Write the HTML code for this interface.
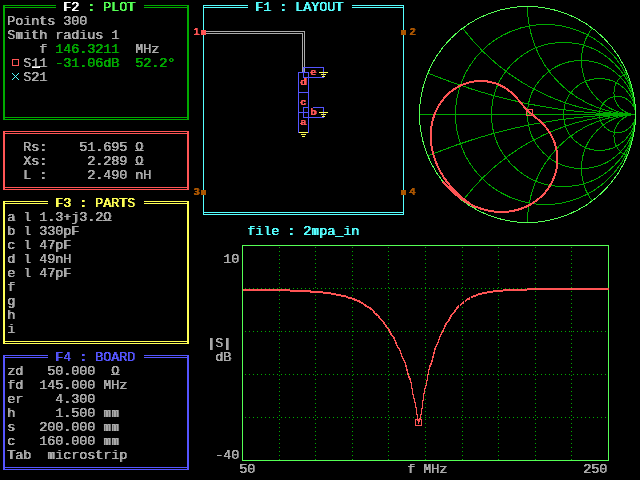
<!DOCTYPE html><html><head><meta charset="utf-8"><title>Puff</title><style>

html,body{margin:0;padding:0;background:#000;}
body{width:640px;height:480px;overflow:hidden;position:relative;font-family:"Liberation Mono",monospace;}
#scr{position:absolute;left:0;top:0;width:640px;height:480px;overflow:hidden;will-change:transform;}
.t{position:absolute;white-space:pre;font-family:"Liberation Mono",monospace;font-size:13.333px;line-height:14px;height:14px;font-weight:normal;color:#aaa;letter-spacing:0;margin:0;padding:0;}
.s{position:absolute;white-space:pre;font-family:"Liberation Sans",sans-serif;font-size:9.5px;line-height:8px;height:8px;font-weight:bold;margin:0;padding:0;transform:scaleX(1.12);transform-origin:0 0;}
svg{position:absolute;left:0;top:0;}
#txt{position:absolute;left:0;top:0;width:640px;height:480px;filter:url(#thr);}
.g{color:#00aa00}.lg{color:#55ff55}.w{color:#fff}.r{color:#ff5555}.y{color:#ffff55}.b{color:#5555ff}.c{color:#55ffff}.br{color:#aa5500}

</style></head><body><div id="scr">
<svg width="640" height="480" viewBox="0 0 640 480">
<defs><filter id="thr" x="0" y="0" width="100%" height="100%" color-interpolation-filters="sRGB"><feComponentTransfer result="a"><feFuncA type="linear" slope="4" intercept="-1.3"/></feComponentTransfer><feOffset in="a" dx="1" dy="0" result="b0"/><feComponentTransfer in="b0" result="b"><feFuncA type="linear" slope="0.7" intercept="0"/></feComponentTransfer><feMerge><feMergeNode in="b"/><feMergeNode in="a"/></feMerge></filter></defs>
<g shape-rendering="crispEdges">
<rect x="3" y="5" width="2" height="115" fill="#00aa00"/>
<rect x="187" y="5" width="2" height="115" fill="#00aa00"/>
<rect x="3" y="5" width="53" height="1" fill="#00aa00"/>
<rect x="144" y="5" width="45" height="1" fill="#00aa00"/>
<rect x="3" y="7" width="53" height="1" fill="#00aa00"/>
<rect x="144" y="7" width="45" height="1" fill="#00aa00"/>
<rect x="3" y="117" width="186" height="1" fill="#00aa00"/>
<rect x="3" y="119" width="186" height="1" fill="#00aa00"/>
<rect x="3" y="131" width="2" height="59" fill="#ff5555"/>
<rect x="187" y="131" width="2" height="59" fill="#ff5555"/>
<rect x="3" y="131" width="186" height="1" fill="#ff5555"/>
<rect x="3" y="133" width="186" height="1" fill="#ff5555"/>
<rect x="3" y="187" width="186" height="1" fill="#ff5555"/>
<rect x="3" y="189" width="186" height="1" fill="#ff5555"/>
<rect x="3" y="201" width="2" height="143" fill="#ffff55"/>
<rect x="187" y="201" width="2" height="143" fill="#ffff55"/>
<rect x="3" y="201" width="45" height="1" fill="#ffff55"/>
<rect x="144" y="201" width="45" height="1" fill="#ffff55"/>
<rect x="3" y="203" width="45" height="1" fill="#ffff55"/>
<rect x="144" y="203" width="45" height="1" fill="#ffff55"/>
<rect x="3" y="341" width="186" height="1" fill="#ffff55"/>
<rect x="3" y="343" width="186" height="1" fill="#ffff55"/>
<rect x="3" y="355" width="2" height="115" fill="#5555ff"/>
<rect x="187" y="355" width="2" height="115" fill="#5555ff"/>
<rect x="3" y="355" width="45" height="1" fill="#5555ff"/>
<rect x="144" y="355" width="45" height="1" fill="#5555ff"/>
<rect x="3" y="357" width="45" height="1" fill="#5555ff"/>
<rect x="144" y="357" width="45" height="1" fill="#5555ff"/>
<rect x="3" y="467" width="186" height="1" fill="#5555ff"/>
<rect x="3" y="469" width="186" height="1" fill="#5555ff"/>
<rect x="32" y="66" width="8" height="2" fill="#ffffff"/>
<rect x="12" y="59" width="7" height="1" fill="#ff5555"/>
<rect x="12" y="65" width="7" height="1" fill="#ff5555"/>
<rect x="12" y="59" width="1" height="7" fill="#ff5555"/>
<rect x="18" y="59" width="1" height="7" fill="#ff5555"/>
<path d="M12,73 L19,80 M19,73 L12,80" stroke="#55ffff" stroke-width="1" fill="none"/>
<rect x="203" y="5" width="45" height="1" fill="#55ffff"/>
<rect x="203" y="7" width="45" height="1" fill="#55ffff"/>
<rect x="352" y="5" width="52" height="1" fill="#55ffff"/>
<rect x="352" y="7" width="52" height="1" fill="#55ffff"/>
<rect x="203" y="5" width="1" height="210" fill="#55ffff"/>
<rect x="403" y="5" width="1" height="210" fill="#55ffff"/>
<rect x="203" y="212" width="201" height="1" fill="#55ffff"/>
<rect x="203" y="214" width="201" height="1" fill="#55ffff"/>
<rect x="201" y="30" width="5" height="5" fill="#ff5555"/>
<rect x="401" y="30" width="5" height="5" fill="#aa5500"/>
<rect x="201" y="190" width="5" height="5" fill="#aa5500"/>
<rect x="401" y="190" width="5" height="5" fill="#aa5500"/>
<rect x="206" y="31" width="99" height="1" fill="#aaaaaa"/>
<rect x="206" y="33" width="97" height="1" fill="#aaaaaa"/>
<rect x="304" y="31" width="1" height="42" fill="#aaaaaa"/>
<rect x="302" y="33" width="1" height="40" fill="#aaaaaa"/>
<rect x="303" y="67" width="21" height="1" fill="#5555ff"/>
<rect x="303" y="77" width="21" height="1" fill="#5555ff"/>
<rect x="303" y="67" width="1" height="11" fill="#5555ff"/>
<rect x="323" y="67" width="1" height="11" fill="#5555ff"/>
<rect x="298" y="72" width="11" height="1" fill="#5555ff"/>
<rect x="298" y="92" width="11" height="1" fill="#5555ff"/>
<rect x="298" y="72" width="1" height="21" fill="#5555ff"/>
<rect x="308" y="72" width="1" height="21" fill="#5555ff"/>
<rect x="298" y="92" width="11" height="1" fill="#5555ff"/>
<rect x="298" y="112" width="11" height="1" fill="#5555ff"/>
<rect x="298" y="92" width="1" height="21" fill="#5555ff"/>
<rect x="308" y="92" width="1" height="21" fill="#5555ff"/>
<rect x="298" y="112" width="11" height="1" fill="#5555ff"/>
<rect x="298" y="132" width="11" height="1" fill="#5555ff"/>
<rect x="298" y="112" width="1" height="21" fill="#5555ff"/>
<rect x="308" y="112" width="1" height="21" fill="#5555ff"/>
<rect x="303" y="107" width="6" height="1" fill="#5555ff"/>
<rect x="313" y="107" width="11" height="1" fill="#5555ff"/>
<rect x="303" y="117" width="21" height="1" fill="#5555ff"/>
<rect x="303" y="107" width="1" height="11" fill="#5555ff"/>
<rect x="323" y="107" width="1" height="11" fill="#5555ff"/>
<rect x="319" y="72" width="9" height="1" fill="#ffff55"/>
<rect x="321" y="74" width="5" height="1" fill="#ffff55"/>
<rect x="322" y="76" width="3" height="1" fill="#ffff55"/>
<rect x="319" y="112" width="9" height="1" fill="#ffff55"/>
<rect x="321" y="114" width="5" height="1" fill="#ffff55"/>
<rect x="322" y="116" width="3" height="1" fill="#ffff55"/>
<rect x="299" y="132" width="9" height="1" fill="#ffff55"/>
<rect x="301" y="134" width="5" height="1" fill="#ffff55"/>
<rect x="302" y="136" width="3" height="1" fill="#ffff55"/>
</g>
<g shape-rendering="crispEdges">
<clipPath id="sc"><circle cx="527.5" cy="114.5" r="108.5"/></clipPath>
<g clip-path="url(#sc)" stroke="#00aa00" fill="none" stroke-width="1">
<circle cx="545.50" cy="114.5" r="90.00"/>
<circle cx="563.50" cy="114.5" r="72.00"/>
<circle cx="581.50" cy="114.5" r="54.00"/>
<circle cx="599.50" cy="114.5" r="36.00"/>
<circle cx="617.50" cy="114.5" r="18.00"/>
<circle cx="635.5" cy="-425.50" r="540.00"/>
<circle cx="635.5" cy="654.50" r="540.00"/>
<circle cx="635.5" cy="-101.50" r="216.00"/>
<circle cx="635.5" cy="330.50" r="216.00"/>
<circle cx="635.5" cy="6.50" r="108.00"/>
<circle cx="635.5" cy="222.50" r="108.00"/>
<circle cx="635.5" cy="60.50" r="54.00"/>
<circle cx="635.5" cy="168.50" r="54.00"/>
<circle cx="635.5" cy="92.90" r="21.60"/>
<circle cx="635.5" cy="136.10" r="21.60"/>
<line x1="419" y1="114.5" x2="636" y2="114.5"/>
</g>
<circle cx="527.5" cy="114.5" r="108" stroke="#55ff55" fill="none" stroke-width="1"/>
<polyline points="475.3,207.1 473.8,206.2 472.4,205.4 471.1,204.5 469.7,203.6 468.4,202.6 467.1,201.7 465.9,200.8 464.6,199.8 463.4,198.9 462.3,197.9 461.1,196.9 460.0,196.0 458.9,195.0 457.8,194.0 456.8,193.0 455.7,192.0 454.7,190.9 453.8,189.9 452.8,188.9 451.9,187.9 451.0,186.8 450.1,185.8 449.2,184.7 448.4,183.6 447.5,182.6 446.7,181.5 445.9,180.4 445.2,179.3 444.4,178.2 443.7,177.1 443.0,176.0 442.3,174.9 441.6,173.8 441.0,172.7 440.3,171.5 439.7,170.4 439.1,169.2 438.5,168.1 438.0,166.9 437.4,165.8 436.9,164.6 436.4,163.4 435.9,162.2 435.5,161.0 435.0,159.8 434.6,158.5 434.2,157.3 433.8,156.1 433.4,154.8 433.1,153.6 432.8,152.3 432.5,151.0 432.2,149.7 431.9,148.4 431.7,147.1 431.5,145.7 431.3,144.4 431.1,143.1 431.0,141.7 430.9,140.3 430.8,138.9 430.8,137.5 430.8,136.1 430.8,134.7 430.8,133.2 430.9,131.8 431.0,130.3 431.1,128.9 431.3,127.4 431.5,125.9 431.8,124.4 432.1,122.9 432.4,121.3 432.8,119.8 433.3,118.3 433.8,116.7 434.3,115.2 434.9,113.6 435.5,112.1 436.2,110.5 437.0,108.9 437.8,107.4 438.7,105.8 439.6,104.3 440.6,102.8 441.7,101.3 442.8,99.8 444.0,98.3 445.3,96.9 446.6,95.5 448.0,94.1 449.5,92.8 451.1,91.5 452.7,90.3 454.4,89.1 456.1,88.0 457.9,86.9 459.8,85.9 461.7,85.0 463.7,84.2 465.8,83.5 467.8,82.8 470.0,82.2 472.1,81.8 474.3,81.4 476.5,81.2 478.7,81.0 480.9,81.0 483.1,81.0 485.2,81.2 487.4,81.5 489.5,81.8 491.6,82.3 493.7,82.9 495.7,83.5 497.6,84.2 499.5,85.0 501.3,85.9 503.1,86.8 504.7,87.8 506.3,88.8 507.9,89.9 509.3,91.0 510.7,92.1 512.0,93.2 513.2,94.4 514.4,95.5 515.5,96.7 516.5,97.8 517.5,98.9 518.5,100.0 519.4,101.1 520.3,102.1 521.1,103.1 521.9,104.1 522.7,105.1 523.5,106.1 524.3,107.0 525.1,107.9 525.9,108.7 526.8,109.6 527.6,110.4 528.5,111.3 529.4,112.1 530.3,112.9 531.3,113.7 532.3,114.6 533.4,115.5 534.5,116.4 535.6,117.3 536.8,118.3 538.0,119.4 539.3,120.5 540.6,121.7 541.9,123.0 543.2,124.4 544.6,125.9 546.0,127.5 547.3,129.2 548.6,131.1 549.9,133.1 551.2,135.2 552.3,137.4 553.4,139.8 554.4,142.3 555.3,144.9 556.0,147.6 556.6,150.4 557.1,153.3 557.3,156.3 557.4,159.3 557.3,162.3 557.0,165.4 556.6,168.4 555.9,171.5 555.1,174.4 554.0,177.4 552.8,180.2 551.5,183.0 550.0,185.6 548.4,188.1 546.6,190.5 544.8,192.8 542.8,194.9 540.8,196.9 538.7,198.7 536.6,200.4 534.4,202.0 532.2,203.4 530.0,204.7 527.8,205.8 525.7,206.9 523.5,207.8 521.3,208.6 519.2,209.3 517.1,209.9 515.0,210.4 513.0,210.9 511.0,211.2 509.1,211.5 507.2,211.7 505.4,211.8 503.6,211.9 501.8,212.0 500.1,212.0 498.5,211.9 496.9,211.8 495.3,211.7 493.8,211.5 492.3,211.3 490.9,211.1 489.5,210.9 488.2,210.6 486.9,210.3 485.6,210.0 484.4,209.7 483.2,209.3 482.1,209.0 480.9,208.6 479.9,208.3 478.8,207.9 477.8,207.5 476.8,207.1 475.8,206.7 474.9,206.4 474.0,206.0 473.1,205.6 472.2,205.2 471.4,204.7 470.6,204.3 469.8,203.9 469.0,203.5 468.3,203.1 467.6,202.7 466.9,202.3 466.2,201.9 465.5,201.5 464.9,201.1 464.2,200.7 463.6,200.3 463.0,199.9 462.4,199.5 461.8,199.1 461.3,198.7 460.7,198.3 460.2,198.0 459.7,197.6 459.1,197.2 458.6,196.8 458.2,196.4 457.7,196.1 457.2,195.7 456.8,195.3 456.3,195.0 455.9,194.6 455.4,194.3 455.0,193.9 454.6,193.6 454.2,193.2 453.8,192.9 453.4,192.5 453.1,192.2 452.7,191.9 452.3,191.5 452.0,191.2 451.6,190.9 451.3,190.6 451.0,190.2 450.6,189.9 450.3,189.6 450.0,189.3 449.7,189.0 449.4,188.7 449.1,188.4 448.8,188.1 448.5,187.8 448.2,187.5 447.9,187.2 447.7,186.9 447.4,186.6 447.1,186.3 446.9,186.1 446.6,185.8 446.4,185.5 446.1,185.2 445.9,185.0 445.6,184.7 445.4,184.4 445.2,184.2 444.9,183.9 444.7,183.6 444.5,183.4 444.3,183.1 444.1,182.9 443.8,182.6 443.6,182.4 443.4,182.1 443.2,181.9 443.0,181.6" stroke="#ff5555" fill="none" stroke-width="2" stroke-linejoin="round"/>
<rect x="242" y="245" width="367" height="1" fill="#55ff55"/>
<rect x="242" y="460" width="367" height="1" fill="#55ff55"/>
<rect x="242" y="245" width="1" height="216" fill="#55ff55"/>
<rect x="608" y="245" width="1" height="216" fill="#55ff55"/>
<line x1="279.5" y1="247" x2="279.5" y2="460" stroke="#00aa00" stroke-width="1" stroke-dasharray="1 3"/>
<line x1="315.5" y1="247" x2="315.5" y2="460" stroke="#00aa00" stroke-width="1" stroke-dasharray="1 3"/>
<line x1="352.5" y1="247" x2="352.5" y2="460" stroke="#00aa00" stroke-width="1" stroke-dasharray="1 3"/>
<line x1="388.5" y1="247" x2="388.5" y2="460" stroke="#00aa00" stroke-width="1" stroke-dasharray="1 3"/>
<line x1="425.5" y1="247" x2="425.5" y2="460" stroke="#00aa00" stroke-width="1" stroke-dasharray="1 3"/>
<line x1="462.5" y1="247" x2="462.5" y2="460" stroke="#00aa00" stroke-width="1" stroke-dasharray="1 3"/>
<line x1="498.5" y1="247" x2="498.5" y2="460" stroke="#00aa00" stroke-width="1" stroke-dasharray="1 3"/>
<line x1="535.5" y1="247" x2="535.5" y2="460" stroke="#00aa00" stroke-width="1" stroke-dasharray="1 3"/>
<line x1="571.5" y1="247" x2="571.5" y2="460" stroke="#00aa00" stroke-width="1" stroke-dasharray="1 3"/>
<line x1="245" y1="288.5" x2="608" y2="288.5" stroke="#00aa00" stroke-width="1" stroke-dasharray="1 3"/>
<line x1="245" y1="331.5" x2="608" y2="331.5" stroke="#00aa00" stroke-width="1" stroke-dasharray="1 3"/>
<line x1="245" y1="374.5" x2="608" y2="374.5" stroke="#00aa00" stroke-width="1" stroke-dasharray="1 3"/>
<line x1="245" y1="417.5" x2="608" y2="417.5" stroke="#00aa00" stroke-width="1" stroke-dasharray="1 3"/>
<polyline points="242.5,289.5 243.5,289.5 244.5,289.5 246.5,289.5 247.5,289.5 248.5,289.5 249.5,289.5 251.5,289.5 252.5,289.5 253.5,289.5 254.5,289.5 255.5,289.5 257.5,289.5 258.5,289.5 259.5,289.5 260.5,289.5 262.5,289.5 263.5,289.5 264.5,289.5 265.5,289.5 266.5,289.5 268.5,289.5 269.5,289.5 270.5,289.5 271.5,289.5 273.5,289.5 274.5,289.5 275.5,289.5 276.5,289.5 277.5,289.5 279.5,289.5 280.5,289.5 281.5,289.5 282.5,289.5 284.5,289.5 285.5,289.5 286.5,289.5 287.5,289.5 289.5,289.5 290.5,290.5 291.5,290.5 292.5,290.5 293.5,290.5 295.5,290.5 296.5,290.5 297.5,290.5 298.5,290.5 300.5,290.5 301.5,290.5 302.5,290.5 303.5,290.5 304.5,290.5 306.5,290.5 307.5,290.5 308.5,290.5 309.5,290.5 311.5,291.5 312.5,291.5 313.5,291.5 314.5,291.5 315.5,291.5 317.5,291.5 318.5,291.5 319.5,291.5 320.5,291.5 322.5,291.5 323.5,292.5 324.5,292.5 325.5,292.5 326.5,292.5 328.5,292.5 329.5,292.5 330.5,292.5 331.5,293.5 333.5,293.5 334.5,293.5 335.5,293.5 336.5,294.5 337.5,294.5 339.5,294.5 340.5,294.5 341.5,295.5 342.5,295.5 344.5,295.5 345.5,295.5 346.5,296.5 347.5,296.5 348.5,297.5 350.5,297.5 351.5,297.5 352.5,298.5 353.5,298.5 355.5,299.5 356.5,299.5 357.5,300.5 358.5,300.5 360.5,301.5 361.5,302.5 362.5,302.5 363.5,303.5 364.5,304.5 366.5,305.5 367.5,306.5 368.5,306.5 369.5,307.5 371.5,308.5 372.5,309.5 373.5,310.5 374.5,312.5 375.5,313.5 377.5,314.5 378.5,315.5 379.5,317.5 380.5,318.5 382.5,320.5 383.5,321.5 384.5,323.5 385.5,324.5 386.5,326.5 388.5,328.5 389.5,330.5 390.5,332.5 391.5,334.5 393.5,336.5 394.5,338.5 395.5,341.5 396.5,343.5 397.5,346.5 399.5,348.5 400.5,351.5 401.5,354.5 402.5,357.5 404.5,360.5 405.5,363.5 406.5,367.5 407.5,371.5 408.5,375.5 410.5,379.5 411.5,384.5 412.5,390.5 413.5,396.5 415.5,403.5 416.5,410.5 417.5,417.5 418.5,421.5 419.5,419.5 421.5,412.5 422.5,404.5 423.5,396.5 424.5,389.5 426.5,383.5 427.5,377.5 428.5,371.5 429.5,366.5 431.5,362.5 432.5,358.5 433.5,354.5 434.5,350.5 435.5,346.5 437.5,343.5 438.5,340.5 439.5,337.5 440.5,334.5 442.5,331.5 443.5,329.5 444.5,326.5 445.5,324.5 446.5,322.5 448.5,320.5 449.5,318.5 450.5,316.5 451.5,314.5 453.5,312.5 454.5,311.5 455.5,309.5 456.5,308.5 457.5,306.5 459.5,305.5 460.5,304.5 461.5,303.5 462.5,302.5 464.5,301.5 465.5,300.5 466.5,299.5 467.5,298.5 468.5,298.5 470.5,297.5 471.5,296.5 472.5,296.5 473.5,295.5 475.5,295.5 476.5,294.5 477.5,294.5 478.5,293.5 479.5,293.5 481.5,293.5 482.5,292.5 483.5,292.5 484.5,292.5 486.5,292.5 487.5,291.5 488.5,291.5 489.5,291.5 490.5,291.5 492.5,291.5 493.5,290.5 494.5,290.5 495.5,290.5 497.5,290.5 498.5,290.5 499.5,290.5 500.5,290.5 502.5,290.5 503.5,289.5 504.5,289.5 505.5,289.5 506.5,289.5 508.5,289.5 509.5,289.5 510.5,289.5 511.5,289.5 513.5,289.5 514.5,289.5 515.5,289.5 516.5,289.5 517.5,289.5 519.5,289.5 520.5,289.5 521.5,289.5 522.5,289.5 524.5,289.5 525.5,289.5 526.5,289.5 527.5,288.5 528.5,288.5 530.5,288.5 531.5,288.5 532.5,288.5 533.5,288.5 535.5,288.5 536.5,288.5 537.5,288.5 538.5,288.5 539.5,288.5 541.5,288.5 542.5,288.5 543.5,288.5 544.5,288.5 546.5,288.5 547.5,288.5 548.5,288.5 549.5,288.5 550.5,288.5 552.5,288.5 553.5,288.5 554.5,288.5 555.5,288.5 557.5,288.5 558.5,288.5 559.5,288.5 560.5,288.5 561.5,288.5 563.5,288.5 564.5,288.5 565.5,288.5 566.5,288.5 568.5,288.5 569.5,288.5 570.5,288.5 571.5,288.5 573.5,288.5 574.5,288.5 575.5,288.5 576.5,288.5 577.5,288.5 579.5,288.5 580.5,288.5 581.5,288.5 582.5,288.5 584.5,288.5 585.5,288.5 586.5,288.5 587.5,288.5 588.5,288.5 590.5,288.5 591.5,288.5 592.5,288.5 593.5,288.5 595.5,288.5 596.5,288.5 597.5,288.5 598.5,288.5 599.5,288.5 601.5,288.5 602.5,288.5 603.5,288.5 604.5,288.5 606.5,288.5 607.5,288.5 608.5,288.5" stroke="#ff5555" fill="none" stroke-width="1"/>
<polyline points="242.5,290.5 243.5,290.5 244.5,290.5 246.5,290.5 247.5,290.5 248.5,290.5 249.5,290.5 251.5,290.5 252.5,290.5 253.5,290.5 254.5,290.5 255.5,290.5 257.5,290.5 258.5,290.5 259.5,290.5 260.5,290.5 262.5,290.5 263.5,290.5 264.5,290.5 265.5,290.5 266.5,290.5 268.5,290.5 269.5,290.5 270.5,290.5 271.5,290.5 273.5,290.5 274.5,290.5 275.5,290.5 276.5,290.5 277.5,290.5 279.5,290.5 280.5,290.5 281.5,290.5 282.5,290.5 284.5,290.5 285.5,290.5 286.5,290.5 287.5,290.5 289.5,290.5 290.5,291.5 291.5,291.5 292.5,291.5 293.5,291.5 295.5,291.5 296.5,291.5 297.5,291.5 298.5,291.5 300.5,291.5 301.5,291.5 302.5,291.5 303.5,291.5 304.5,291.5 306.5,291.5 307.5,291.5 308.5,291.5 309.5,291.5 311.5,292.5 312.5,292.5 313.5,292.5 314.5,292.5 315.5,292.5 317.5,292.5 318.5,292.5 319.5,292.5 320.5,292.5 322.5,292.5 323.5,293.5 324.5,293.5 325.5,293.5 326.5,293.5 328.5,293.5 329.5,293.5 330.5,293.5 331.5,294.5 333.5,294.5 334.5,294.5 335.5,294.5 336.5,295.5 337.5,295.5 339.5,295.5 340.5,295.5 341.5,296.5 342.5,296.5 344.5,296.5 345.5,296.5 346.5,297.5 347.5,297.5 348.5,298.5 350.5,298.5 351.5,298.5 352.5,299.5 353.5,299.5 355.5,300.5 356.5,300.5 357.5,301.5 358.5,301.5 360.5,302.5 361.5,303.5 362.5,303.5 363.5,304.5 364.5,305.5 366.5,306.5 367.5,307.5 368.5,307.5 369.5,308.5 371.5,309.5 372.5,310.5 373.5,311.5 374.5,313.5 375.5,314.5 377.5,315.5 378.5,316.5 379.5,318.5 380.5,319.5 382.5,321.5 383.5,322.5 384.5,324.5 385.5,325.5 386.5,327.5 388.5,329.5 389.5,331.5 390.5,333.5 391.5,335.5 393.5,337.5 394.5,339.5 395.5,342.5 396.5,344.5 397.5,347.5 399.5,349.5 400.5,352.5 401.5,355.5 402.5,358.5 404.5,361.5 405.5,364.5 406.5,368.5 407.5,372.5 408.5,376.5 410.5,380.5 411.5,385.5 412.5,391.5 413.5,397.5 415.5,404.5 416.5,411.5 417.5,418.5 418.5,422.5 419.5,420.5 421.5,413.5 422.5,405.5 423.5,397.5 424.5,390.5 426.5,384.5 427.5,378.5 428.5,372.5 429.5,367.5 431.5,363.5 432.5,359.5 433.5,355.5 434.5,351.5 435.5,347.5 437.5,344.5 438.5,341.5 439.5,338.5 440.5,335.5 442.5,332.5 443.5,330.5 444.5,327.5 445.5,325.5 446.5,323.5 448.5,321.5 449.5,319.5 450.5,317.5 451.5,315.5 453.5,313.5 454.5,312.5 455.5,310.5 456.5,309.5 457.5,307.5 459.5,306.5 460.5,305.5 461.5,304.5 462.5,303.5 464.5,302.5 465.5,301.5 466.5,300.5 467.5,299.5 468.5,299.5 470.5,298.5 471.5,297.5 472.5,297.5 473.5,296.5 475.5,296.5 476.5,295.5 477.5,295.5 478.5,294.5 479.5,294.5 481.5,294.5 482.5,293.5 483.5,293.5 484.5,293.5 486.5,293.5 487.5,292.5 488.5,292.5 489.5,292.5 490.5,292.5 492.5,292.5 493.5,291.5 494.5,291.5 495.5,291.5 497.5,291.5 498.5,291.5 499.5,291.5 500.5,291.5 502.5,291.5 503.5,290.5 504.5,290.5 505.5,290.5 506.5,290.5 508.5,290.5 509.5,290.5 510.5,290.5 511.5,290.5 513.5,290.5 514.5,290.5 515.5,290.5 516.5,290.5 517.5,290.5 519.5,290.5 520.5,290.5 521.5,290.5 522.5,290.5 524.5,290.5 525.5,290.5 526.5,290.5 527.5,289.5 528.5,289.5 530.5,289.5 531.5,289.5 532.5,289.5 533.5,289.5 535.5,289.5 536.5,289.5 537.5,289.5 538.5,289.5 539.5,289.5 541.5,289.5 542.5,289.5 543.5,289.5 544.5,289.5 546.5,289.5 547.5,289.5 548.5,289.5 549.5,289.5 550.5,289.5 552.5,289.5 553.5,289.5 554.5,289.5 555.5,289.5 557.5,289.5 558.5,289.5 559.5,289.5 560.5,289.5 561.5,289.5 563.5,289.5 564.5,289.5 565.5,289.5 566.5,289.5 568.5,289.5 569.5,289.5 570.5,289.5 571.5,289.5 573.5,289.5 574.5,289.5 575.5,289.5 576.5,289.5 577.5,289.5 579.5,289.5 580.5,289.5 581.5,289.5 582.5,289.5 584.5,289.5 585.5,289.5 586.5,289.5 587.5,289.5 588.5,289.5 590.5,289.5 591.5,289.5 592.5,289.5 593.5,289.5 595.5,289.5 596.5,289.5 597.5,289.5 598.5,289.5 599.5,289.5 601.5,289.5 602.5,289.5 603.5,289.5 604.5,289.5 606.5,289.5 607.5,289.5 608.5,289.5" stroke="#ff5555" fill="none" stroke-width="1"/>
</g>
<g shape-rendering="crispEdges">
<rect x="526" y="109" width="7" height="1" fill="#ff5555"/>
<rect x="526" y="115" width="7" height="1" fill="#ff5555"/>
<rect x="526" y="109" width="1" height="7" fill="#ff5555"/>
<rect x="532" y="109" width="1" height="7" fill="#ff5555"/>
<rect x="415" y="419" width="7" height="1" fill="#ff5555"/>
<rect x="415" y="425" width="7" height="1" fill="#ff5555"/>
<rect x="415" y="419" width="1" height="7" fill="#ff5555"/>
<rect x="421" y="419" width="1" height="7" fill="#ff5555"/>
</g>
</svg>
<div id="txt">
<div class="t" style="left:63px;top:1px"><span class="w">F2</span><span class="lg"> : PLOT</span></div>
<div class="t" style="left:7px;top:15px">Points 300</div>
<div class="t" style="left:7px;top:29px">Smith radius 1</div>
<div class="t" style="left:39px;top:43px">f <span class="g">146.3211</span>  MHz</div>
<div class="t" style="left:23px;top:57px">S11 <span class="g">-31.06dB  52.2°</span></div>
<div class="t" style="left:23px;top:71px">S21</div>
<div class="t" style="left:23px;top:141px">Rs:    51.695 Ω</div>
<div class="t" style="left:23px;top:155px">Xs:     2.289 Ω</div>
<div class="t" style="left:23px;top:169px">L :     2.490 nH</div>
<div class="t y" style="left:55px;top:197px">F3 : PARTS</div>
<div class="t" style="left:7px;top:211px">a l 1.3+j3.2Ω</div>
<div class="t" style="left:7px;top:225px">b l 330pF</div>
<div class="t" style="left:7px;top:239px">c l 47pF</div>
<div class="t" style="left:7px;top:253px">d l 49nH</div>
<div class="t" style="left:7px;top:267px">e l 47pF</div>
<div class="t" style="left:7px;top:281px">f</div>
<div class="t" style="left:7px;top:295px">g</div>
<div class="t" style="left:7px;top:309px">h</div>
<div class="t" style="left:7px;top:323px">i</div>
<div class="t b" style="left:55px;top:351px">F4 : BOARD</div>
<div class="t" style="left:7px;top:365px">zd   50.000  Ω</div>
<div class="t" style="left:7px;top:379px">fd  145.000 MHz</div>
<div class="t" style="left:7px;top:393px">er    4.300</div>
<div class="t" style="left:7px;top:407px">h     1.500 mm</div>
<div class="t" style="left:7px;top:421px">s   200.000 mm</div>
<div class="t" style="left:7px;top:435px">c   160.000 mm</div>
<div class="t" style="left:7px;top:449px">Tab  microstrip</div>
<div class="t c" style="left:255px;top:1px">F1 : LAYOUT</div>
<div class="t c" style="left:247px;top:225px">file : 2mpa_in</div>
<div class="t" style="left:223px;top:253px">10</div>
<div class="t" style="left:207px;top:337px">|S|</div>
<div class="t" style="left:215px;top:351px">dB</div>
<div class="t" style="left:215px;top:449px">-40</div>
<div class="t" style="left:239px;top:463px">50</div>
<div class="t" style="left:407px;top:463px">f MHz</div>
<div class="t" style="left:583px;top:463px">250</div>
<div class="s r" style="left:193px;top:28px;font-size:10.5px;font-family:'Liberation Mono',monospace;transform:none">1</div>
<div class="s br" style="left:409px;top:28px;font-size:10.5px;font-family:'Liberation Mono',monospace;transform:none">2</div>
<div class="s br" style="left:193px;top:188px;font-size:10.5px;font-family:'Liberation Mono',monospace;transform:none">3</div>
<div class="s br" style="left:409px;top:188px;font-size:10.5px;font-family:'Liberation Mono',monospace;transform:none">4</div>
<div class="s r" style="left:310px;top:68px">e</div>
<div class="s r" style="left:300px;top:78px">d</div>
<div class="s r" style="left:300px;top:98px">c</div>
<div class="s r" style="left:310px;top:108px">b</div>
<div class="s r" style="left:300px;top:118px">a</div>
</div>
</div></body></html>
